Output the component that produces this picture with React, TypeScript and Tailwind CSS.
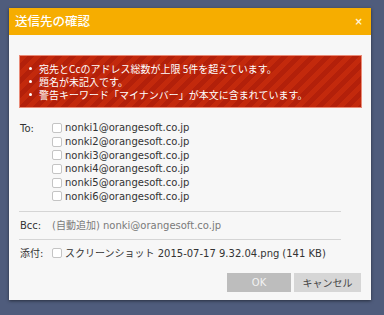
import React from "react";

const recipients = [
  "nonki1@orangesoft.co.jp",
  "nonki2@orangesoft.co.jp",
  "nonki3@orangesoft.co.jp",
  "nonki4@orangesoft.co.jp",
  "nonki5@orangesoft.co.jp",
  "nonki6@orangesoft.co.jp",
];

const warnings = [
  "宛先とCcのアドレス総数が上限 5件を超えています。",
  "題名が未記入です。",
  "警告キーワード「マイナンバー」が本文に含まれています。",
];

const Check = () => (
  <span className="mr-[3px] inline-block h-[10px] w-[10px] shrink-0 rounded-[2px] border border-[#c4c4c4] bg-white" />
);

export default function App() {
  return (
    <div className="h-[315px] w-[384px] bg-[#4f5c7c] pt-[8px] pl-[9px] font-['DejaVu_Sans','Noto_Sans_CJK_JP',sans-serif] text-[10px] text-[#333]">
      <div className="h-[292px] w-[362px] bg-[#f7f7f7] shadow-[0_1px_3px_rgba(0,0,0,0.5)]">
        {/* Header */}
        <div className="flex h-[27px] items-center justify-between bg-[#f6ad00] pr-[8px] pl-[6px]">
          <span className="font-['Noto_Sans_CJK_JP',sans-serif] text-[12.5px] font-medium text-white">
            送信先の確認
          </span>
          <span className="text-[10px] font-bold leading-none text-[#fff5dd]">×</span>
        </div>

        <div className="px-[10px] pt-[20px]">
          {/* Warnings */}
          <div className="w-[343px] border border-[#e98b78] bg-[repeating-linear-gradient(135deg,#c3290c_0px,#c3290c_5px,#b3200a_5px,#b3200a_10px)] pt-[6px] pr-[9px] pb-[6px] pl-[8px] text-white">
            <ul className="font-['Noto_Sans_CJK_JP',sans-serif] text-[10px]">
              {warnings.map((w) => (
                <li key={w} className="flex h-[13px] items-center leading-[13px]">
                  <span className="ml-[1px] mr-[7px] inline-block h-[3px] w-[3px] rounded-full bg-white" />
                  <span>{w}</span>
                </li>
              ))}
            </ul>
          </div>

          {/* To */}
          <div className="mt-[13px] flex w-[322px] border-b border-[#d5d5d5] pb-[8px] pl-[1px]">
            <div className="w-[32px]">To:</div>
            <div className="flex flex-col">
              {recipients.map((r) => (
                <div key={r} className="flex h-[13.7px] items-center">
                  <Check />
                  <span>{r}</span>
                </div>
              ))}
            </div>
          </div>

          {/* Bcc */}
          <div className="flex h-[28px] w-[322px] items-center border-b border-[#d5d5d5] pl-[1px]">
            <div className="w-[32px]">Bcc:</div>
            <div className="text-[#7a7a7a]">(自動追加) nonki@orangesoft.co.jp</div>
          </div>

          {/* Attachment */}
          <div className="flex h-[26px] items-center pl-[1px]">
            <div className="w-[32px]">添付:</div>
            <Check />
            <span>
              スクリーンショット 2015-07-17 9.32.04.png<span className="ml-[3px]">(141 KB)</span>
            </span>
          </div>

          {/* Buttons */}
          <div className="mt-[7px] flex justify-end gap-[3px]">
            <button className="h-[19px] w-[64px] bg-[#bdbdbd] text-[10px] text-[#f2f2f2]">OK</button>
            <button className="h-[19px] w-[67px] bg-[#d6d6d6] font-['Noto_Sans_CJK_JP',sans-serif] text-[10px] text-[#444]">
              キャンセル
            </button>
          </div>
        </div>
      </div>
    </div>
  );
}
